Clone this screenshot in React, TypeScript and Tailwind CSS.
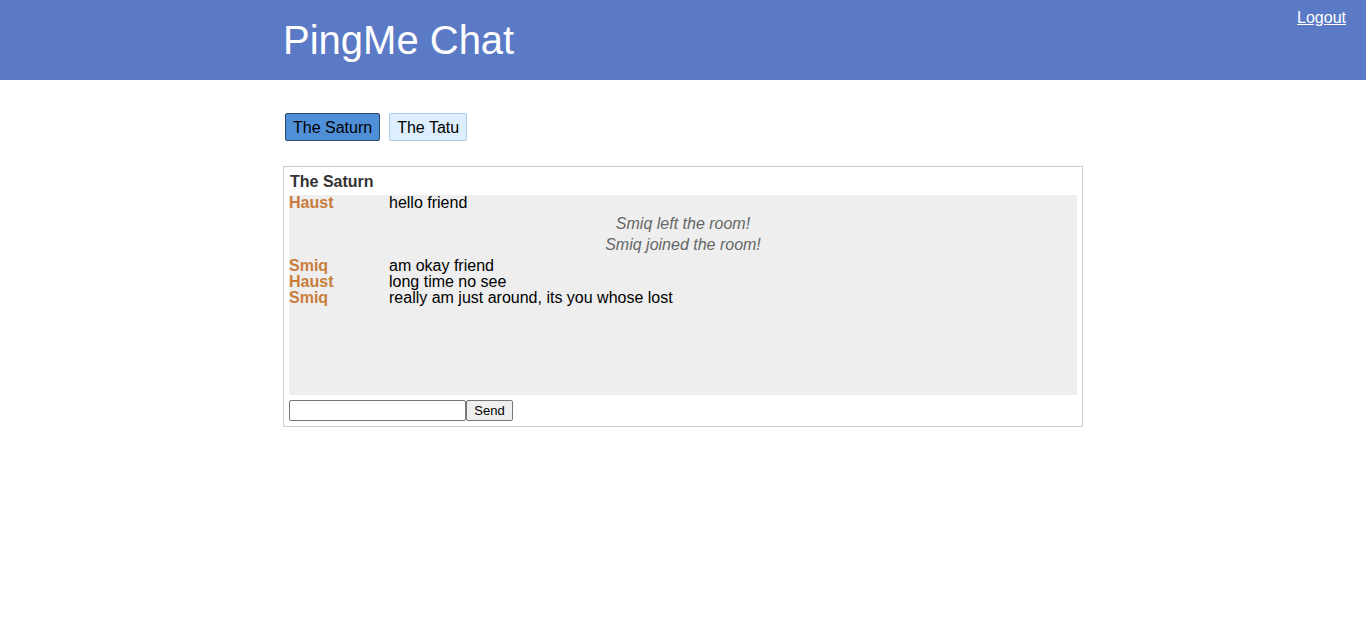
import { useState } from 'react';

type Msg =
  | { kind: 'msg'; user: string; text: string }
  | { kind: 'sys'; text: string };

const rooms = ['The Saturn', 'The Tatu'];

const messages: Msg[] = [
  { kind: 'msg', user: 'Haust', text: 'hello friend' },
  { kind: 'sys', text: 'Smiq left the room!' },
  { kind: 'sys', text: 'Smiq joined the room!' },
  { kind: 'msg', user: 'Smiq', text: 'am okay friend' },
  { kind: 'msg', user: 'Haust', text: 'long time no see' },
  { kind: 'msg', user: 'Smiq', text: 'really am just around, its you whose lost' },
];

const App = () => {
  const [active, setActive] = useState(0);
  const [draft, setDraft] = useState('');

  return (
    <div className="min-h-screen bg-white text-black font-['Liberation_Sans',Arial,sans-serif]">
      {/* Header */}
      <header className="grid grid-cols-[1fr_800px_1fr] h-20 bg-[#5a7ac6] text-white">
        <div />
        <div className="flex items-center">
          <h1 className="text-[40px] leading-[45px] font-normal">PingMe Chat</h1>
        </div>
        <div className="flex justify-end items-start pt-[9px] pr-5">
          <a href="#" className="text-base leading-[18px] underline text-white">Logout</a>
        </div>
      </header>

      <main className="w-[800px] mx-auto">
        {/* Room tabs */}
        <div className="flex gap-[9px] ml-[2px] mt-[33px]">
          {rooms.map((room, i) => (
            <button
              key={room}
              onClick={() => setActive(i)}
              className={`h-7 px-[7px] pt-[2px] text-base leading-[18px] rounded-[2px] border ${
                i === active
                  ? 'bg-[#4f8fd8] border-[#2c4866] text-black'
                  : 'bg-[#ddeeff] border-[#abcbea] text-black'
              }`}
            >
              {room}
            </button>
          ))}
        </div>

        {/* Chat box */}
        <div className="mt-[25px] border border-[#cccccc] p-[5px]">
          <div className="pl-px pt-px text-base leading-[18px] font-bold text-[#333333]">{rooms[active]}</div>
          <div className="mt-[4px] h-[200px] bg-[#eeeeee] text-base">
            {messages.map((m, i) =>
              m.kind === 'msg' ? (
                <div key={i} className="flex leading-4">
                  <span className="w-[100px] shrink-0 font-bold text-[#c97d3b]">{m.user}</span>
                  <span>{m.text}</span>
                </div>
              ) : (
                <div
                  key={i}
                  className={`text-center italic text-[#666666] leading-[21px] ${
                    messages[i - 1]?.kind === 'msg' ? 'pt-[2px]' : ''
                  } ${messages[i + 1]?.kind === 'msg' ? 'pb-[3px]' : ''}`}
                >
                  {m.text}
                </div>
              )
            )}
          </div>
          <form
            className="flex mt-[5px]"
            onSubmit={e => {
              e.preventDefault();
              setDraft('');
            }}
          >
            <input
              value={draft}
              onChange={e => setDraft(e.target.value)}
              className="w-[177px] h-[21px] border border-[#767676] rounded-[2px] bg-white px-1 text-[13px] outline-none"
            />
            <button
              type="submit"
              className="w-[47px] h-[21px] border border-[#767676] rounded-[2px] bg-[#efefef] text-[13px] leading-[15px] text-black"
            >
              Send
            </button>
          </form>
        </div>
      </main>
    </div>
  );
};

export default App;
